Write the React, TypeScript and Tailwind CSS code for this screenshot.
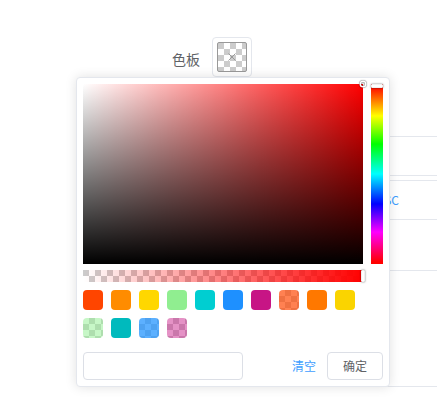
import React from "react";

const checker =
  "bg-[conic-gradient(#ccc_25%,#fff_0_50%,#ccc_0_75%,#fff_0)] bg-[length:12px_12px]";
const checkerAlt =
  "bg-[conic-gradient(#fff_25%,#ccc_0_50%,#fff_0_75%,#ccc_0)] bg-[length:12px_12px]";

const presets: string[] = [
  "bg-[#ff4500]",
  "bg-[#ff8c00]",
  "bg-[#ffd700]",
  "bg-[#90ee90]",
  "bg-[#00ced1]",
  "bg-[#1e90ff]",
  "bg-[#c71585]",
  "bg-[rgba(255,69,0,0.68)]",
  "bg-[rgb(255,120,0)]",
  "bg-[rgb(250,212,0)]",
  "bg-[rgba(144,240,144,0.5)]",
  "bg-[rgb(0,186,189)]",
  "bg-[rgba(31,147,255,0.73)]",
  "bg-[#c7158577]",
];

export default function App() {
  return (
    <div className="relative w-[437px] h-[407px] overflow-hidden bg-white font-['Noto_Sans_CJK_SC','Noto_Sans',sans-serif]">
      {/* form row */}
      <div className="flex items-center pt-[37px] pl-[172px]">
        <span className="text-[14px] leading-[20px] text-[#606266] pr-[12px] pt-[3px]">色板</span>
        <div className="w-[40px] h-[40px] border border-[#e4e7ed] rounded-[4px] p-[4px]">
          <div className={`relative w-[30px] h-[30px] border border-[#999] rounded-[2px] ${checkerAlt}`}>
            <svg
              className="absolute left-1/2 top-1/2 -translate-x-1/2 -translate-y-1/2"
              width="10"
              height="10"
              viewBox="0 0 10 10"
            >
              <path d="M1.5 1.5L8.5 8.5M8.5 1.5L1.5 8.5" stroke="#999" strokeWidth="1" fill="none" />
            </svg>
          </div>
        </div>
      </div>

      {/* background content behind the dropdown */}
      <div className="ml-[200px]">
        <div className="h-[60px] border-b border-[#e4e7ed]" />
        <div className="h-[39px] border-b border-[#e4e7ed]" />
        <div className="h-[5px] border-b border-[#e4e7ed]" />
        <div className="h-[39px] border-b border-[#e4e7ed] flex items-center justify-end pr-[38px]">
          <span className="text-[12px] text-[#409eff]">DESC</span>
        </div>
        <div className="h-[51px] border-b border-[#e4e7ed]" />
        <div className="h-[116px] border-b border-[#e4e7ed]" />
      </div>

      {/* dropdown panel */}
      <div className="absolute left-[76px] top-[77px] w-[314px] bg-white border border-[#e4e7ed] rounded-[4px] p-[6px] shadow-[0_0_12px_rgba(0,0,0,0.12)]">
        <div className="flex">
          {/* sv panel */}
          <div className="relative w-[280px] h-[180px] bg-[#ff0000]">
            <div className="absolute inset-0 bg-[linear-gradient(to_right,#fff,rgba(255,255,255,0))]" />
            <div className="absolute inset-0 bg-[linear-gradient(to_top,#000,rgba(0,0,0,0))]" />
            <div className="absolute left-[278px] top-[-2px] w-[4px] h-[4px] rounded-full shadow-[0_0_0_1.5px_#fff,inset_0_0_1px_1px_rgba(0,0,0,0.3),0_0_1px_2px_rgba(0,0,0,0.4)]" />
          </div>
          {/* hue slider */}
          <div className="relative ml-[8px] w-[12px] h-[180px] py-[2px] bg-[#ff0000]">
            <div className="w-full h-full bg-[linear-gradient(to_bottom,#f00_0%,#ff0_17%,#0f0_33%,#0ff_50%,#00f_67%,#f0f_83%,#f00_100%)]" />
            <div className="absolute left-0 top-0 w-full h-[4px] bg-white border border-[#f0f0f0] rounded-[1px] shadow-[0_0_2px_rgba(0,0,0,0.6)]" />
          </div>
        </div>

        {/* alpha slider */}
        <div className={`relative mt-[6px] w-[280px] h-[12px] ${checkerAlt}`}>
          <div className="absolute inset-0 bg-[linear-gradient(to_right,rgba(255,0,0,0)_0%,#f00_100%)]" />
          <div className="absolute left-[278px] top-0 w-[4px] h-full bg-white border border-[#f0f0f0] rounded-[1px] shadow-[0_0_2px_rgba(0,0,0,0.6)]" />
        </div>

        {/* predefine */}
        <div className="mt-[8px] w-[280px] grid grid-cols-[repeat(10,20px)] gap-x-[8px] gap-y-[8px] pb-[8px]">
          {presets.map((c, i) => (
            <div key={i} className={`w-[20px] h-[20px] rounded-[4px] overflow-hidden ${checker}`}>
              <div className={`w-full h-full ${c}`} />
            </div>
          ))}
        </div>

        {/* buttons */}
        <div className="mt-[6px] flex items-center">
          <div className="w-[160px] h-[28px] border border-[#dcdfe6] rounded-[4px] bg-white" />
          <span className="ml-auto text-[12px] text-[#409eff] leading-[28px]">清空</span>
          <div className="ml-[11px] w-[56px] h-[28px] border border-[#dcdfe6] rounded-[4px] flex items-center justify-center text-[12px] text-[#606266]">
            确定
          </div>
        </div>
      </div>
    </div>
  );
}
